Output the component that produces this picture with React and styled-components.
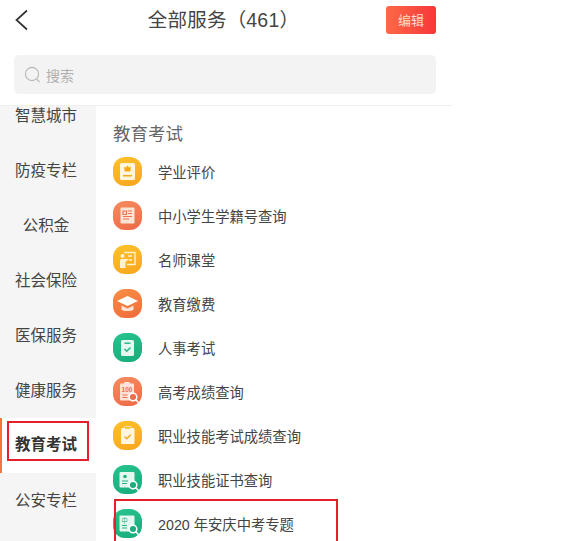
import React from 'react';
import styled, { createGlobalStyle } from 'styled-components';

const GlobalStyle = createGlobalStyle`
  html, body {
    margin: 0;
    padding: 0;
    background: #fff;
    overflow: hidden;
  }
  body {
    font-family: "Liberation Sans", "Noto Sans CJK SC", sans-serif;
  }
`;

const Page = styled.div`
  width: 583px;
  height: 541px;
  overflow: hidden;
  background: #fff;
`;

const Phone = styled.div`
  width: 452px;
  height: 100%;
  display: flex;
  flex-direction: column;
`;

const Header = styled.header`
  height: 40px;
  padding: 0 16px 0 14px;
  display: flex;
  align-items: center;
  justify-content: space-between;
`;

const BackButton = styled.span`
  display: flex;
  width: 16px;
`;

const Title = styled.h1`
  margin: -3px 0 0 31px;
  font-size: 19.5px;
  font-weight: 400;
  letter-spacing: 0.2px;
  color: #444;
`;

const EditButton = styled.span`
  width: 50px;
  height: 28px;
  margin-top: -1px;
  border-radius: 3px;
  background: linear-gradient(90deg, #fb6a45, #f8363a);
  color: #ffd9cf;
  font-size: 13px;
  display: flex;
  align-items: center;
  justify-content: center;
`;

const SearchWrap = styled.div`
  padding: 15px 16px 11px 14px;
  border-bottom: 1px solid #efefef;
`;

const SearchBox = styled.div`
  height: 39px;
  padding-left: 10px;
  border-radius: 5px;
  background: #f3f3f3;
  display: flex;
  align-items: center;
  gap: 5px;
  color: #b0b0b0;
  font-size: 14px;
`;

const Body = styled.div`
  flex: 1;
  min-height: 0;
  display: flex;
`;

const Sidebar = styled.nav`
  width: 96px;
  flex-shrink: 0;
  overflow: hidden;
  background: #f5f5f5;
`;

const SideList = styled.div`
  margin-top: -18px;
`;

const SideItem = styled.div`
  height: 55px;
  box-sizing: border-box;
  display: flex;
  align-items: center;
  justify-content: center;
  padding: 0 4px 4px 0;
  font-size: 15.5px;
  color: #444;
`;

const ActiveItem = styled(SideItem)`
  padding-right: 2px;
  background: #fff;
  border-left: 2px solid #f4763a;
`;

const SideMark = styled.span`
  width: 82px;
  height: 40px;
  margin-top: -5px;
  padding: 0 4px 5px 0;
  box-sizing: border-box;
  border: 2px solid #e5202a;
  display: flex;
  align-items: flex-end;
  justify-content: center;
  font-weight: 700;
  color: #333;
`;

const Content = styled.main`
  flex: 1;
  padding: 16px 0 0 17px;
  overflow: hidden;
`;

const SectionTitle = styled.h2`
  margin: 0 0 3px;
  height: 24px;
  line-height: 24px;
  font-size: 17.5px;
  font-weight: 400;
  color: #666;
`;

const ServiceRow = styled.div`
  position: relative;
  height: 44px;
  display: flex;
  align-items: center;
  gap: 16px;
  font-size: 14.3px;
  color: #444;

  ${props => props.$marked && `
    &::after {
      content: '';
      position: absolute;
      left: 1px;
      top: -2px;
      width: 224px;
      height: 60px;
      box-sizing: border-box;
      border: 2px solid #e5202a;
    }
  `}
`;

const IconTile = styled.span`
  width: 29px;
  height: 29px;
  flex-shrink: 0;
  border-radius: 12px;
  background: ${props => props.$bg};
  display: flex;
`;

const amber = 'linear-gradient(160deg, #fdc22b, #f9a51d)';
const coral = 'linear-gradient(160deg, #f68b5f, #ef6a47)';
const orange = 'linear-gradient(160deg, #f88e45, #f26b3a)';
const green = 'linear-gradient(160deg, #27c38f, #17ab7b)';

const Glyph = ({ children }) => (
  <svg width="29" height="29" viewBox="0 0 29 29" fill="none">{children}</svg>
);

const Magnifier = ({ fill }) => (
  <g>
    <circle cx="20" cy="20" r="3.8" fill={fill} stroke="#fff" strokeWidth="1.5" />
    <path d="M22.8 22.8l2.4 2.4" stroke="#fff" strokeWidth="1.6" strokeLinecap="round" />
  </g>
);

const icons = {
  report: (
    <Glyph>
      <rect x="7" y="6" width="15" height="17" rx="1.5" fill="#fff6dd" />
      <path d="M11 9.5l1.8 1.2 1.7-2.2 1.7 2.2 1.8-1.2-.7 5h-5.6z" fill="#f8a61c" />
      <rect x="10" y="18" width="9" height="1.5" fill="#f8a61c" />
    </Glyph>
  ),
  student: (
    <Glyph>
      <rect x="7.5" y="6.5" width="14" height="16" rx="1" fill="#fde3d6" />
      <path d="M10 10h3.5v3.5H10zM15 10h4M15 12.5h4M10 15.5h9M10 18h6" stroke="#ef7350" strokeWidth="1.2" />
    </Glyph>
  ),
  teacher: (
    <Glyph>
      <path d="M11 7.5h11v12h-8" stroke="#fff2cf" strokeWidth="1.4" />
      <circle cx="9.5" cy="11" r="2" fill="#fff2cf" />
      <path d="M7 23v-7.5c0-1 1-1.5 2-1.5h7l-3.5 3V23z" fill="#fff2cf" />
      <path d="M15 11h4M16 15h3" stroke="#fff2cf" strokeWidth="1.3" />
    </Glyph>
  ),
  tuition: (
    <Glyph>
      <path d="M14.5 7L25 12l-10.5 5L4 12z" fill="#fff" />
      <path d="M8.5 16.5v4.2c2 1.8 10 1.8 12 0v-4.2l-6 3z" fill="#fde3d6" />
    </Glyph>
  ),
  personnel: (
    <Glyph>
      <rect x="8" y="7" width="13" height="16" rx="1.5" fill="#e4f8f0" />
      <rect x="11.5" y="9.5" width="6" height="1.4" fill="#1eb585" />
      <path d="M11.5 16l2.2 2.2 3.8-3.7" stroke="#1eb585" strokeWidth="1.4" />
    </Glyph>
  ),
  score: (
    <Glyph>
      <rect x="7" y="6.5" width="14" height="17" rx="1" fill="#fde3d6" />
      <rect x="11" y="5" width="6" height="2.5" rx=".8" fill="#fde3d6" />
      <text x="14" y="14.5" textAnchor="middle" fontSize="6.5" fontWeight="700" fill="#ef6f4b">100</text>
      <path d="M9.5 18h5M9.5 20.5h5" stroke="#ef6f4b" strokeWidth="1.1" />
      <Magnifier fill="#ef6a47" />
    </Glyph>
  ),
  skillExam: (
    <Glyph>
      <rect x="8" y="7" width="13.5" height="16" rx="1.5" fill="#fff6dd" />
      <rect x="11.5" y="5.5" width="6.5" height="2.6" rx="1" fill="#f9b82a" stroke="#fff6dd" strokeWidth=".8" />
      <path d="M11.5 15.5l2.3 2.2 4-4" stroke="#f8a61c" strokeWidth="1.4" />
    </Glyph>
  ),
  certificate: (
    <Glyph>
      <rect x="6.5" y="7" width="15" height="15.5" rx="1" fill="#e4f8f0" />
      <circle cx="12" cy="11.5" r="1.8" fill="#1eb585" />
      <path d="M9 16h6M9 18.5h5" stroke="#1eb585" strokeWidth="1.1" />
      <Magnifier fill="#1aae7f" />
    </Glyph>
  ),
  topic: (
    <Glyph>
      <rect x="6.5" y="6.5" width="15" height="16" rx="1" fill="#e4f8f0" />
      <text x="11.5" y="13.5" textAnchor="middle" fontSize="6.5" fill="#1eb585">中</text>
      <path d="M9 16.5h5M9 19h5" stroke="#1eb585" strokeWidth="1.1" />
      <Magnifier fill="#1aae7f" />
    </Glyph>
  ),
};

const categories = ['智慧城市', '防疫专栏', '公积金', '社会保险', '医保服务', '健康服务', '教育考试', '公安专栏'];

const services = [
  { name: '学业评价', icon: 'report', bg: amber },
  { name: '中小学生学籍号查询', icon: 'student', bg: coral },
  { name: '名师课堂', icon: 'teacher', bg: amber },
  { name: '教育缴费', icon: 'tuition', bg: orange },
  { name: '人事考试', icon: 'personnel', bg: green },
  { name: '高考成绩查询', icon: 'score', bg: coral },
  { name: '职业技能考试成绩查询', icon: 'skillExam', bg: amber },
  { name: '职业技能证书查询', icon: 'certificate', bg: green },
  { name: '2020 年安庆中考专题', icon: 'topic', bg: green, marked: true },
];

const App = () => {
  return (
    <Page>
      <GlobalStyle />
      <Phone>
        <Header>
          <BackButton>
            <svg width="15" height="22" viewBox="0 0 15 22" fill="none">
              <path d="M13 1.5L2.5 11 13 20.5" stroke="#333" strokeWidth="1.7" />
            </svg>
          </BackButton>
          <Title>全部服务（461）</Title>
          <EditButton>编辑</EditButton>
        </Header>
        <SearchWrap>
          <SearchBox>
            <svg width="17" height="18" viewBox="0 0 17 18" fill="none">
              <circle cx="8" cy="8" r="6.6" stroke="#b8b8b8" strokeWidth="1.1" />
              <path d="M12.6 13l3 3.2" stroke="#b8b8b8" strokeWidth="1.1" />
            </svg>
            搜索
          </SearchBox>
        </SearchWrap>
        <Body>
          <Sidebar>
            <SideList>
              {categories.map(name => (
                name === '教育考试' ? (
                  <ActiveItem key={name}>
                    <SideMark>{name}</SideMark>
                  </ActiveItem>
                ) : (
                  <SideItem key={name}>{name}</SideItem>
                )
              ))}
            </SideList>
          </Sidebar>
          <Content>
            <SectionTitle>教育考试</SectionTitle>
            {services.map(item => (
              <ServiceRow key={item.name} $marked={item.marked}>
                <IconTile $bg={item.bg}>{icons[item.icon]}</IconTile>
                {item.name}
              </ServiceRow>
            ))}
          </Content>
        </Body>
      </Phone>
    </Page>
  );
};

export default App;
